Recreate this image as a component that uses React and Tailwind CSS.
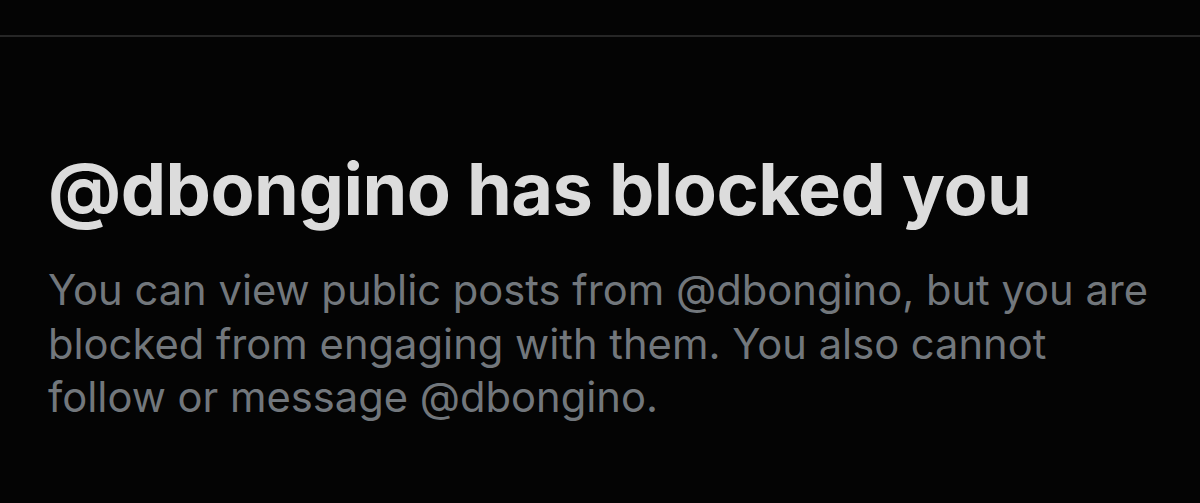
export default function App() {
  return (
    <div className="w-[1200px] h-[503px] bg-[#040404] overflow-hidden" style={{ fontFamily: 'Inter, "Noto Sans", sans-serif' }}>
      <div className="h-[35px]" />
      <div className="h-[2px] bg-[#262626]" />
      <div className="pl-[48px] pr-2">
        <h1 className="mt-[110px] text-[72px] leading-[84px] font-bold text-[#dcdcdc] tracking-[-0.5px] whitespace-nowrap">
          @dbongino has blocked you
        </h1>
        <p className="mt-[33px] text-[41.7px] leading-[53.5px] text-[#72777c] whitespace-nowrap">
          You can view public posts from @dbongino, but you are
          <br />
          blocked from engaging with them. You also cannot
          <br />
          follow or message @dbongino.
        </p>
      </div>
    </div>
  );
}
